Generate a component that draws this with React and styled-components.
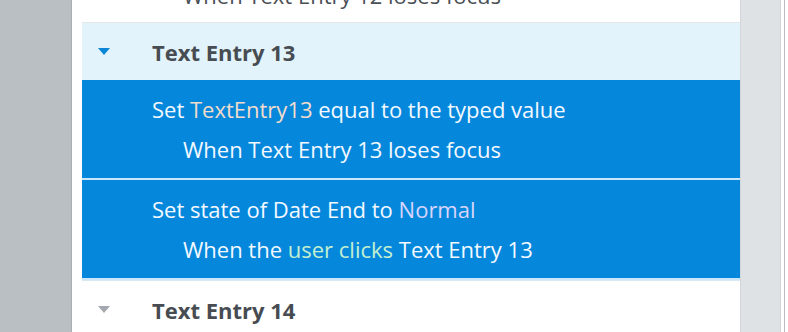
import { styled, createGlobalStyle } from "styled-components";

const GlobalStyle = createGlobalStyle`
  html, body {
    margin: 0;
    padding: 0;
    background: #ffffff;
  }
  body {
    font-family: "Open Sans", "Liberation Sans", sans-serif;
  }
`;

const Frame = styled.div`
  display: flex;
  width: 788px;
  height: 332px;
  overflow: hidden;
`;

const Gutter = styled.div`
  width: 71px;
  flex: none;
  background: #b9bfc3;
  border-right: 1px solid #a9afb3;
`;

const Panel = styled.div`
  flex: 1;
  min-width: 0;
  background: #ffffff;
  padding-left: 10px;
  overflow: hidden;
`;

const List = styled.div`
  display: flex;
  flex-direction: column;
  margin-top: -74px;
`;

const Header = styled.div`
  display: flex;
  align-items: center;
  height: 57px;
  border-top: 1px solid ${(p) => (p.$open ? "#e4e6e8" : "#d8e9f4")};
  background: ${(p) => (p.$open ? "#e2f3fb" : "#ffffff")};
  color: #474c52;
  font-size: 22px;
  font-weight: 700;
  white-space: nowrap;
`;

const Caret = styled.svg`
  width: 12px;
  height: 7px;
  margin: 0 42px 0 16px;
  fill: ${(p) => (p.$open ? "#0b86d6" : "#a3a9ae")};
`;

const Action = styled.div`
  display: flex;
  flex-direction: column;
  padding: 9px 0 ${(p) => (p.$tail ? "5px" : "9px")} 70px;
  height: 80px;
  background: ${(p) => (p.$selected ? "#0588dc" : "#ffffff")};
  color: ${(p) => (p.$selected ? "#f4f9ff" : "#4a4f55")};
  border-bottom: 2px solid ${(p) => (p.$selected ? "#cbe6f8" : "#ffffff")};
  font-size: 22px;
  line-height: 40px;
  white-space: nowrap;
`;

const Line = styled.div`
  padding-left: ${(p) => (p.$indent ? "31px" : "0")};
`;

const Token = styled.span`
  color: ${(p) => p.$color};
`;

const Scrollbar = styled.div`
  width: 39px;
  flex: none;
  background: #dee2e5;
  border-left: 1px solid #d3d7db;
  border-right: 1px solid #d0d4d8;
`;

const Edge = styled.div`
  width: 7px;
  flex: none;
  background: linear-gradient(
    to right,
    #ffffff 3px,
    #b9bdc1 3px,
    #b9bdc1 4px,
    #ffffff 4px
  );
`;

function CaretIcon({ open }) {
  return (
    <Caret $open={open} viewBox="0 0 12 7">
      <path d="M0 0h12L6 7z" />
    </Caret>
  );
}

export default function App() {
  return (
    <>
      <GlobalStyle />
      <Frame>
        <Gutter />
        <Panel>
          <List>
            <Action $tail>
              <Line>Set TextEntry12 equal to the typed value</Line>
              <Line $indent>When Text Entry 12 loses focus</Line>
            </Action>
            <Header $open>
              <CaretIcon open />
              Text Entry 13
            </Header>
            <Action $selected>
              <Line>
                Set <Token $color="#f3dccb">TextEntry13</Token> equal to the
                typed value
              </Line>
              <Line $indent>When Text Entry 13 loses focus</Line>
            </Action>
            <Action $selected>
              <Line>
                Set state of Date End to <Token $color="#d9d4fb">Normal</Token>
              </Line>
              <Line $indent>
                When the <Token $color="#c3f0d0">user clicks</Token> Text Entry
                13
              </Line>
            </Action>
            <Header>
              <CaretIcon />
              Text Entry 14
            </Header>
          </List>
        </Panel>
        <Scrollbar />
        <Edge />
      </Frame>
    </>
  );
}
